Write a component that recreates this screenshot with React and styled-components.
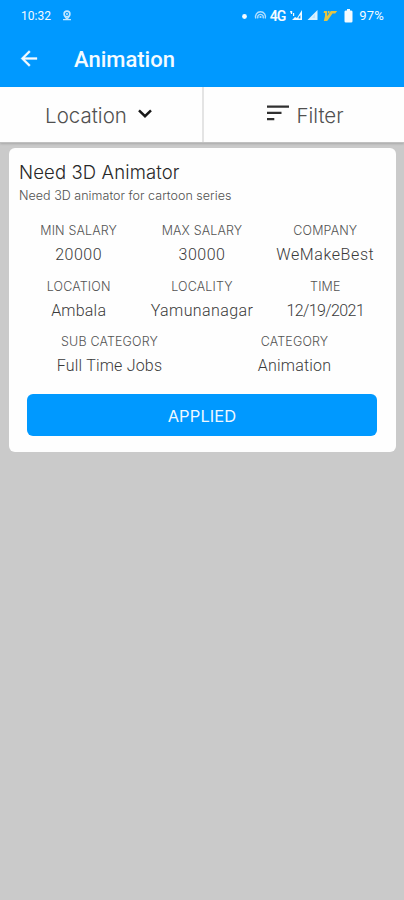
import React from 'react';
import styled, { createGlobalStyle } from "styled-components";

const GlobalStyle = createGlobalStyle`
    * {
        box-sizing: border-box;
    }

    body {
        margin: 0;
        background: #cacaca;
        font-family: Inter, "Liberation Sans", sans-serif;
    }
`;

const Screen = styled.div`
    width: 404px;
    height: 900px;
    overflow: hidden;
    background: #cacaca;
`;

const Header = styled.header`
    height: 87px;
    background: #0099ff;
    color: #f4fbff;
`;

const StatusBar = styled.div`
    height: 31px;
    padding: 1px 20px 0 21px;
    display: flex;
    align-items: center;
    justify-content: space-between;
    font-family: Roboto, sans-serif;
    font-size: 12px;
    line-height: 30px;
`;

const StatusGroup = styled.div`
    display: flex;
    align-items: center;
`;

const StatusText = styled.span`
    margin-left: ${props => props.$gap || 0}px;
    font-size: ${props => props.$size || 12}px;
    font-weight: ${props => props.$bold ? 600 : 400};
    letter-spacing: ${props => props.$spacing || 0}px;
    white-space: nowrap;
`;

const StatusIcon = styled.svg`
    display: block;
    flex: none;
    margin-left: ${props => props.$gap}px;
`;

const TitleBar = styled.div`
    height: 56px;
    padding-left: 17px;
    display: flex;
    align-items: center;
`;

const Title = styled.h1`
    margin: 2px 0 0 33px;
    font-family: Roboto, sans-serif;
    font-size: 22px;
    font-weight: 500;
    line-height: 28px;
    letter-spacing: 0;
`;

const Toolbar = styled.div`
    height: 56px;
    display: flex;
    background: #fefefe;
    border-bottom: 1px solid #c0c0c0;
    box-shadow: 0 1px 2px rgba(0, 0, 0, 0.16);
`;

const ToolbarItem = styled.div`
    width: 202px;
    padding: 2px ${props => props.$right || 0}px 0 ${props => props.$left || 0}px;
    display: flex;
    align-items: center;
    justify-content: center;
    color: #505050;
    font-size: 20.5px;
    font-weight: 300;
    letter-spacing: 0;

    & + & {
        border-left: 2px solid #e4e4e4;
    }
`;

const ToolbarIcon = styled.svg`
    display: block;
    flex: none;
    margin: ${props => props.$margin};
`;

const Card = styled.section`
    width: 387px;
    height: 304px;
    margin: 5px 0 0 9px;
    padding: 11px 9px 0 8px;
    background: #fefefe;
    border-radius: 6px;
`;

const JobTitle = styled.h2`
    margin: 0 0 0 2px;
    color: #282828;
    font-size: 18.5px;
    font-weight: 300;
    line-height: 26px;
    letter-spacing: 0.13px;
`;

const JobText = styled.p`
    margin: 0 0 0 2px;
    color: #505050;
    font-size: 12.5px;
    font-weight: 300;
    line-height: 21px;
    letter-spacing: 0.03px;
`;

const Details = styled.div`
    display: grid;
    grid-template-columns: repeat(${props => props.$columns}, 1fr);
    margin-top: ${props => props.$top || 0}px;
`;

const Detail = styled.div`
    height: 55.5px;
    text-align: center;
    white-space: nowrap;
`;

const Label = styled.div`
    color: #545454;
    font-size: 12.5px;
    font-weight: 300;
    line-height: 20px;
    letter-spacing: 0.15px;
`;

const Value = styled.div`
    margin-top: 2px;
    color: #3a3a3a;
    font-family: Roboto, sans-serif;
    font-size: 16px;
    font-weight: 300;
    line-height: 24px;
    letter-spacing: ${props => props.$spacing}px;
`;

const ApplyButton = styled.button`
    display: block;
    width: 350px;
    height: 42px;
    margin: 6px 0 0 10px;
    padding: 2px 0 0;
    border: none;
    border-radius: 6px;
    background: #0099ff;
    color: #eff8ff;
    font-family: Inter, sans-serif;
    font-size: 16.5px;
    font-weight: 400;
    letter-spacing: 0.1px;
    cursor: pointer;
`;

const mainDetails = [
    { label: 'MIN SALARY', value: '20000', spacing: 0.5 },
    { label: 'MAX SALARY', value: '30000', spacing: 0.5 },
    { label: 'COMPANY', value: 'WeMakeBest', spacing: 0.6 },
    { label: 'LOCATION', value: 'Ambala' },
    { label: 'LOCALITY', value: 'Yamunanagar', spacing: 0.4 },
    { label: 'TIME', value: '12/19/2021', spacing: -0.6 },
];

const categoryDetails = [
    { label: 'SUB CATEGORY', value: 'Full Time Jobs' },
    { label: 'CATEGORY', value: 'Animation' },
];

const DetailList = ({ items, columns, top }) => (
    <Details $columns={columns} $top={top}>
        {items.map(item => (
            <Detail key={item.label}>
                <Label>{item.label}</Label>
                <Value $spacing={item.spacing || 0.2}>{item.value}</Value>
            </Detail>
        ))}
    </Details>
);

const Status = () => (
    <StatusBar>
        <StatusGroup>
            <StatusText>10:32</StatusText>
            <StatusIcon $gap={11} width="10" height="12" viewBox="0 0 10 12" fill="none" stroke="#c4e7ff">
                <circle cx="5" cy="4" r="2.9" strokeWidth="1.6" />
                <circle cx="5" cy="4" r="1" fill="#c4e7ff" stroke="none" />
                <path d="M3 7.2l2 1.5 2-1.5M1 9.6h8" strokeWidth="1.4" />
            </StatusIcon>
        </StatusGroup>
        <StatusGroup>
            <StatusIcon $gap={0} width="5" height="5" viewBox="0 0 5 5">
                <circle cx="2.5" cy="2.5" r="2.4" fill="#f4fbff" />
            </StatusIcon>
            <StatusIcon $gap={7} width="13" height="12" viewBox="0 0 13 12" fill="none" stroke="#b0deff" strokeWidth="1.4">
                <path d="M1.8 8.4A5 5 0 1 1 11.2 8.4M4 8.4a2.8 2.8 0 1 1 5 0" />
                <circle cx="6.5" cy="7" r="1.1" fill="#b0deff" stroke="none" />
            </StatusIcon>
            <StatusText $gap={3} $size={14} $bold $spacing={-1}>4G</StatusText>
            <StatusIcon $gap={5} width="13" height="12" viewBox="0 0 13 12" fill="#f4fbff">
                <path d="M12 0v10H2l3-3 2 1z" />
                <path d="M8.6 7v1.5h1.8V5z" fill="#0099ff" />
                <path d="M0 1h2.2v3H1zM3 3h1.2v3H3z" />
            </StatusIcon>
            <StatusIcon $gap={4} width="11" height="12" viewBox="0 0 11 12">
                <path d="M10.5 0v10H.5z" fill="#d9f1ff" />
                <path d="M8 4v4H5z" fill="#b9e3ff" />
            </StatusIcon>
            {/* VoWiFi mark */}
            <StatusIcon $gap={5} width="15" height="13" viewBox="0 0 15 13" fill="#e3c544">
                <path d="M1 1h3.2v5.2L7.8 1h6.4l-2 2.4H9.5L4.2 11H.8L2 6V3H.6z" />
                <path d="M5 1h1.5v2.2H5z" />
            </StatusIcon>
            <StatusIcon $gap={6} width="9" height="14" viewBox="0 0 9 14" fill="#f4fbff">
                <path d="M3 0h3v1.5h1.2A1.3 1.3 0 0 1 8.5 3v9.2a1.3 1.3 0 0 1-1.3 1.3H1.8a1.3 1.3 0 0 1-1.3-1.3V3a1.3 1.3 0 0 1 1.3-1.5H3z" />
            </StatusIcon>
            <StatusText $gap={6} $size={13} $spacing={0.2}>97%</StatusText>
        </StatusGroup>
    </StatusBar>
);

const App = () => {
    return (
        <Screen>
            <GlobalStyle />
            <Header>
                <Status />
                <TitleBar>
                    <svg width="24" height="24" viewBox="0 0 24 24" fill="#f4fbff" stroke="#f4fbff" strokeWidth="0.3">
                        <path d="M20 10.5H7.83l5.59-5.59L12 3.5l-8 8 8 8 1.41-1.41L7.83 12.5H20v-2z" />
                    </svg>
                    <Title>Animation</Title>
                </TitleBar>
            </Header>
            <Toolbar>
                <ToolbarItem $right={5}>
                    Location
                    <ToolbarIcon $margin="-4px 0 0 11px" width="14" height="9" viewBox="0 0 14 9" fill="none" stroke="#181818" strokeWidth="2.5">
                        <path d="M1 1.3l6 5.9 6-5.9" />
                    </ToolbarIcon>
                </ToolbarItem>
                <ToolbarItem $left={3}>
                    <ToolbarIcon $margin="-5px 7px 0 0" width="22" height="16" viewBox="0 0 22 16" fill="#303030">
                        <path d="M0 .5h22v2.2H0zM0 6.8h14.5V9H0zM0 13h7.3v2.2H0z" />
                    </ToolbarIcon>
                    Filter
                </ToolbarItem>
            </Toolbar>
            <Card>
                <JobTitle>Need 3D Animator</JobTitle>
                <JobText>Need 3D animator for cartoon series</JobText>
                <DetailList items={mainDetails} columns={3} top={15} />
                <DetailList items={categoryDetails} columns={2} />
                <ApplyButton>APPLIED</ApplyButton>
            </Card>
        </Screen>
    );
};

export default App;
